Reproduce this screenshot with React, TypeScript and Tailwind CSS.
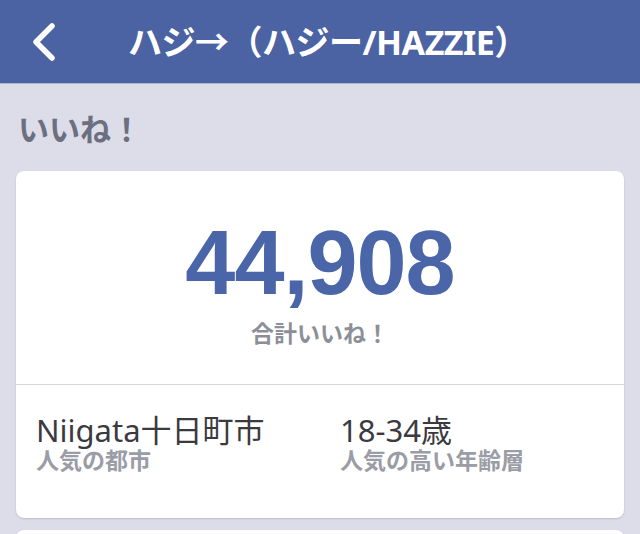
const FONT = '"Noto Sans", "Noto Sans CJK JP", sans-serif'

export default function App() {
  return (
    <div
      className="h-[534px] w-[640px] overflow-hidden bg-[#dcdde8]"
      style={{ fontFamily: FONT }}
    >
      {/* ヘッダー */}
      <div className="flex h-[84px] items-center bg-[#4b62a3] border-b border-[#aab3cf]">
        <svg className="ml-[28px] h-[40px] w-[32px]" viewBox="0 0 32 40" fill="none">
          <polyline
            points="24,4 8,20 24,36"
            stroke="white"
            strokeWidth="5.5"
            strokeLinecap="round"
            strokeLinejoin="round"
          />
        </svg>
        <h1 className="ml-[68px] text-[34px] font-bold leading-none tracking-[-0.5px] text-white">
          ハジ→（ハジー/HAZZIE）
        </h1>
      </div>

      <h2 className="px-[18px] pt-[30px] text-[31px] font-bold leading-none text-[#6b6f7f]">
        いいね！
      </h2>

      {/* カード */}
      <div className="mx-[16px] mt-[26px] h-[347px] rounded-[8px] bg-white shadow-[0_1px_2px_rgba(0,0,0,0.15)]">
        <div className="flex h-[214px] flex-col items-center border-b border-[#d6d7dd]">
          <div
            className="mt-[47px] text-[90px] font-bold leading-none tracking-[-1px] text-[#4a66a8]"
            style={{ fontFamily: '"Liberation Sans", Arial, sans-serif' }}
          >
            44,908
          </div>
          <div className="mt-[14px] text-[23px] font-bold leading-none text-[#8d8f98]">
            合計いいね！
          </div>
        </div>
        <div className="flex pt-[28px]">
          <div className="w-[324px] pl-[20px]">
            <div className="text-[31px] leading-[34px] text-[#3a3a3f]">Niigata十日町市</div>
            <div className="text-[23px] font-bold leading-[26px] text-[#9a9ca6]">人気の都市</div>
          </div>
          <div>
            <div className="text-[31px] leading-[34px] text-[#3a3a3f]">18-34歳</div>
            <div className="text-[23px] font-bold leading-[26px] text-[#9a9ca6]">人気の高い年齢層</div>
          </div>
        </div>
      </div>

      <div className="mx-[16px] mt-[12px] h-[20px] rounded-t-[8px] bg-white shadow-[0_1px_2px_rgba(0,0,0,0.15)]" />
    </div>
  )
}
